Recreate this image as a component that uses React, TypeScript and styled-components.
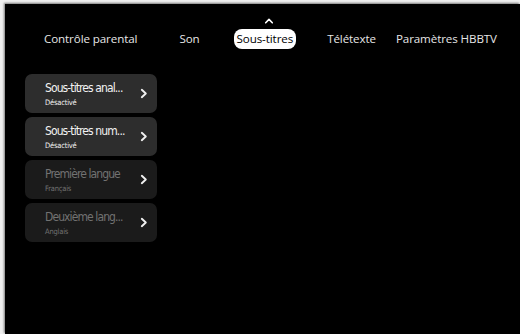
import styled, { createGlobalStyle } from "styled-components";

const GlobalStyle = createGlobalStyle`
  html, body {
    margin: 0;
    padding: 0;
    background: #efefef;
  }
`;

const tabs = [
  { label: "Contrôle parental", space: 42 },
  { label: "Son", space: 34 },
  { label: "Sous-titres", space: 31, active: true },
  { label: "Télétexte", space: 20 },
  { label: "Paramètres HBBTV", space: 0 },
];

const items = [
  { title: "Sous-titres anal...", value: "Désactivé", enabled: true },
  { title: "Sous-titres num...", value: "Désactivé", enabled: true },
  { title: "Première langue", value: "Français", enabled: false },
  { title: "Deuxième lang...", value: "Anglais", enabled: false },
];

const Chevron = () => (
  <svg width="8" height="11" viewBox="0 0 8 11">
    <path d="M1.8 1.8 L5.8 5.5 L1.8 9.2" fill="none" stroke="currentColor" strokeWidth="1.9" strokeLinecap="round" strokeLinejoin="round" />
  </svg>
);

const Caret = () => (
  <svg width="9" height="6" viewBox="0 0 9 6">
    <path d="M1.2 4.8 L4.5 1.4 L7.8 4.8" fill="none" stroke="#fff" strokeWidth="1.6" strokeLinecap="round" strokeLinejoin="round" />
  </svg>
);

const App = () => (
  <>
    <GlobalStyle />
    <Screen>
      <TabBar>
        {tabs.map((t) => (
          <Tab key={t.label} $active={!!t.active} $space={t.space}>
            {t.active && (
              <CaretSlot>
                <Caret />
              </CaretSlot>
            )}
            {t.label}
          </Tab>
        ))}
      </TabBar>
      <Menu>
        {items.map((it) => (
          <Card key={it.title} $enabled={it.enabled}>
            <Texts>
              <Title>{it.title}</Title>
              <Value>{it.value}</Value>
            </Texts>
            <Arrow>
              <Chevron />
            </Arrow>
          </Card>
        ))}
      </Menu>
    </Screen>
  </>
);

export default App;

const Screen = styled.div`
  margin: 4px 0 0 5px;
  width: 515px;
  height: 330px;
  background: #000;
  box-shadow: -1px -1px 2px #777;
  box-sizing: border-box;
  overflow: hidden;
`;

const TabBar = styled.div`
  display: flex;
  align-items: center;
  padding: 25px 0 0 39px;
  height: 20px;
`;

const Tab = styled.div<{ $active: boolean; $space: number }>`
  position: relative;
  margin-right: ${({ $space }) => $space}px;
  padding: ${({ $active }) => ($active ? "0 3px" : "0")};
  height: 20px;
  line-height: 20px;
  border-radius: 8px;
  font-family: "Open Sans", sans-serif;
  font-size: 11.6px;
  letter-spacing: -0.1px;
  color: ${({ $active }) => ($active ? "#000" : "#e6e6e6")};
  background: ${({ $active }) => ($active ? "#fff" : "transparent")};
  white-space: nowrap;
`;

const CaretSlot = styled.span`
  position: absolute;
  left: calc(50% + 4px);
  top: -11px;
  transform: translateX(-50%);
  display: flex;
`;

const Menu = styled.div`
  display: flex;
  flex-direction: column;
  gap: 4px;
  padding: 25px 0 0 20px;
`;

const Card = styled.div<{ $enabled: boolean }>`
  width: 132px;
  height: 39px;
  box-sizing: border-box;
  padding: 0 9px 0 20px;
  border-radius: 7px;
  display: flex;
  align-items: center;
  justify-content: space-between;
  background: ${({ $enabled }) => ($enabled ? "#2d2d2d" : "#1b1b1b")};
  color: ${({ $enabled }) => ($enabled ? "#f2f2f2" : "#727272")};
`;

const Texts = styled.div`
  display: flex;
  flex-direction: column;
  gap: 3px;
  font-family: "DejaVu Sans Condensed", "DejaVu Sans", sans-serif;
`;

const Title = styled.span`
  font-size: 12px;
  line-height: 14px;
  letter-spacing: -0.9px;
  white-space: nowrap;
`;

const Value = styled.span`
  font-size: 7.5px;
  line-height: 9px;
  letter-spacing: -0.2px;
`;

const Arrow = styled.span`
  display: flex;
  color: #f0f0f0;
`;
